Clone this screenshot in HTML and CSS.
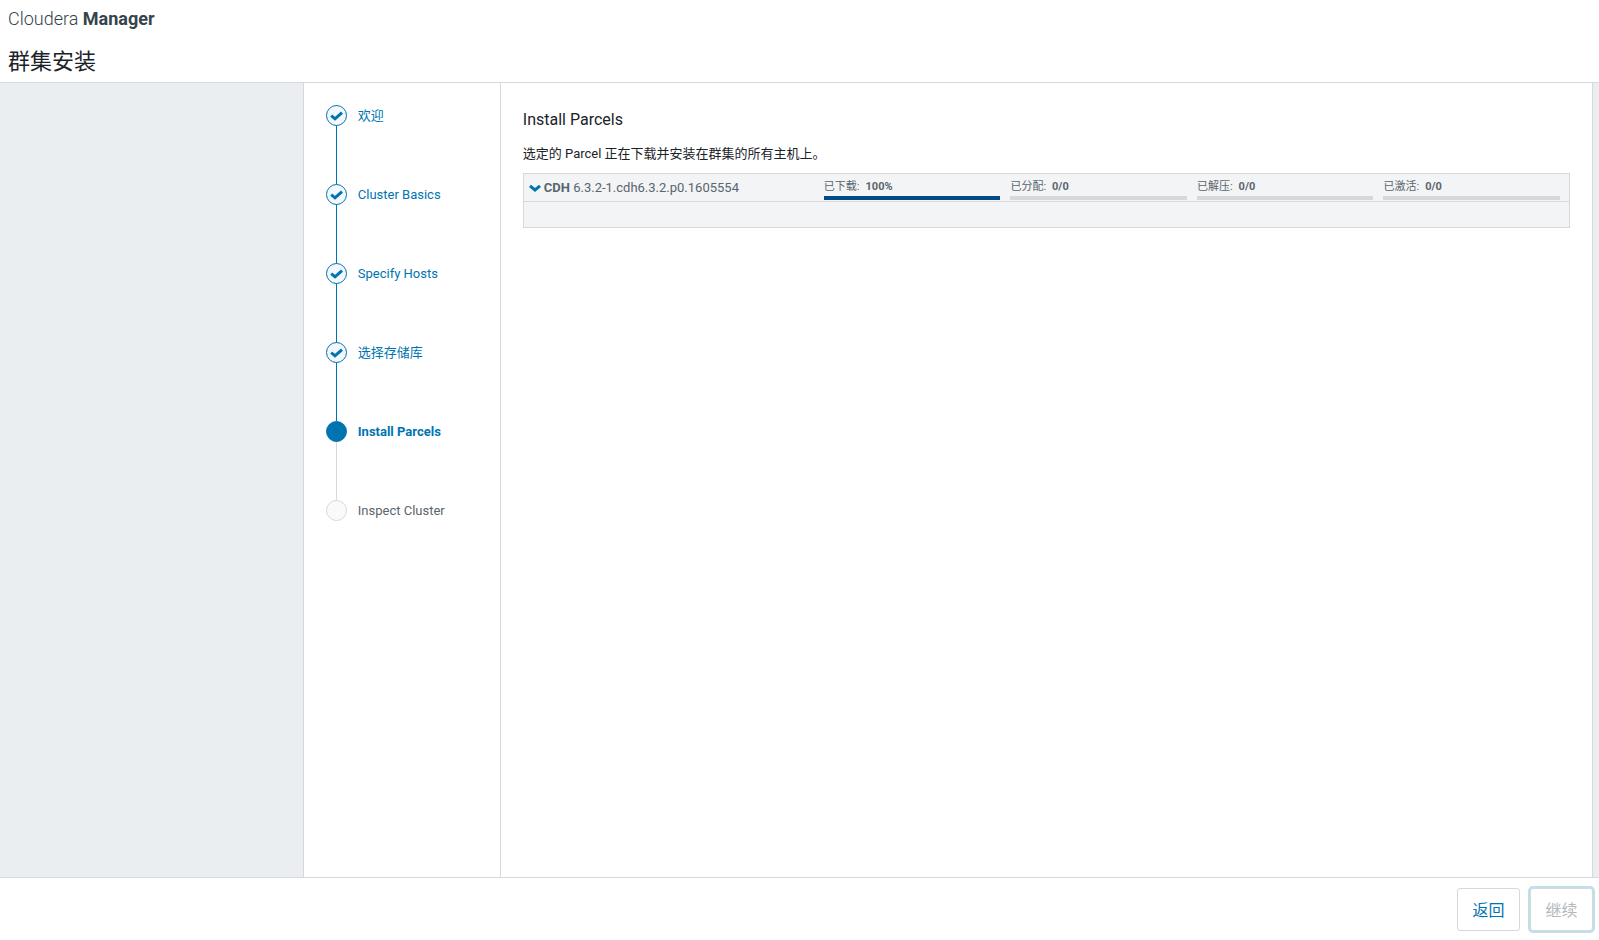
FILE: index.html
```html
<!DOCTYPE html>
<html lang="zh-CN">
<head>
<meta charset="utf-8">
<title>Cloudera Manager</title>
<link rel="stylesheet" href="styles.css">
</head>
<body>
<header class="header">
  <div class="brand">Cloudera <strong>Manager</strong></div>
  <h1 class="page-title">群集安装</h1>
</header>
<div class="wizard">
  <nav class="steps-panel" aria-label="群集安装">
    <ol class="steps">
      <li class="step done"><span class="dot"><svg viewBox="0 0 13 10"><path d="M1.2 4.6 5 7.8 12 1.6"/></svg></span><a class="step-label" href="#">欢迎</a></li>
      <li class="step done"><span class="dot"><svg viewBox="0 0 13 10"><path d="M1.2 4.6 5 7.8 12 1.6"/></svg></span><a class="step-label" href="#">Cluster Basics</a></li>
      <li class="step done"><span class="dot"><svg viewBox="0 0 13 10"><path d="M1.2 4.6 5 7.8 12 1.6"/></svg></span><a class="step-label" href="#">Specify Hosts</a></li>
      <li class="step done"><span class="dot"><svg viewBox="0 0 13 10"><path d="M1.2 4.6 5 7.8 12 1.6"/></svg></span><a class="step-label" href="#">选择存储库</a></li>
      <li class="step current" aria-current="step"><span class="dot"></span><a class="step-label" href="#">Install Parcels</a></li>
      <li class="step"><span class="dot"></span><span class="step-label">Inspect Cluster</span></li>
    </ol>
  </nav>
  <main class="content">
    <h2 class="section-title">Install Parcels</h2>
    <p class="description">选定的 Parcel 正在下载并安装在群集的所有主机上。</p>
    <section class="parcel">
      <div class="parcel-row">
        <button class="parcel-toggle" type="button" aria-expanded="true">
          <svg class="chevron" viewBox="0 0 12 8"><path d="M1 1.8 6 6 11 1.8"/></svg>
          <span><strong>CDH</strong> 6.3.2-1.cdh6.3.2.p0.1605554</span>
        </button>
        <div class="stats">
          <div class="stat"><div class="stat-label">已下载: <strong>100%</strong></div><div class="bar"><div class="bar-fill" style="width: 100%"></div></div></div>
          <div class="stat"><div class="stat-label">已分配: <strong>0/0</strong></div><div class="bar"></div></div>
          <div class="stat"><div class="stat-label">已解压: <strong>0/0</strong></div><div class="bar"></div></div>
          <div class="stat"><div class="stat-label">已激活: <strong>0/0</strong></div><div class="bar"></div></div>
        </div>
      </div>
      <div class="parcel-details"></div>
    </section>
  </main>
</div>
<footer class="footer">
  <button class="button" type="button">返回</button>
  <button class="button next" type="button" disabled>继续</button>
</footer>
</body>
</html>
```
FILE: styles.css
```css
* { box-sizing: border-box; }

body {
  margin: 0;
  min-height: 100vh;
  display: flex;
  flex-direction: column;
  background: #fff;
  color: #1b2329;
  font: 13px/20px Roboto, "Noto Sans CJK SC", sans-serif;
}

a { color: inherit; text-decoration: none; }

button { font-family: inherit; }

.header {
  padding: 8px 8px 4px;
  border-bottom: 1px solid #d6d8db;
}

.brand {
  font-size: 18px;
  font-weight: 300;
  line-height: 22px;
  color: #36444c;
}

.brand strong { font-weight: 700; }

.page-title {
  margin: 16px 0 0;
  font-size: 22px;
  font-weight: 400;
  line-height: 32px;
}

.wizard {
  flex: 1;
  display: flex;
  padding: 0 6px 0 calc(19% - 1px);
  background: #eaeef1;
}

.steps-panel {
  flex: 0 0 197px;
  padding: 22px;
  background: #fff;
  border-left: 1px solid #d6d8db;
}

.steps {
  margin: 0;
  padding: 0;
  list-style: none;
}

.step {
  display: flex;
  align-items: flex-start;
  gap: 11px;
  height: 79px;
  color: #5a656d;
  background: linear-gradient(#d6d8db, #d6d8db) 10px 0 / 1px 100% no-repeat;
}

.step:last-child { background: none; }

.step.done {
  color: #0074b0;
  background-image: linear-gradient(#0074b0, #0074b0);
}

.step.current { color: #0074b0; font-weight: 700; }

.step-label { line-height: 21px; }

.dot {
  display: flex;
  align-items: center;
  justify-content: center;
  width: 21px;
  height: 21px;
  border: 1px solid #d6d8db;
  border-radius: 50%;
  background: #f9fafc;
}

.done .dot { border-color: #0074b0; background: #f3f8fd; }

.current .dot { border-color: #0074b0; background: #0074b0; }

.dot svg {
  width: 13px;
  height: 10px;
  fill: none;
  stroke: #0074b0;
  stroke-width: 3;
}

.content {
  flex: 1;
  padding: 26px 22px;
  background: #fff;
  border: solid #d6d8db;
  border-width: 0 1px;
}

.section-title {
  margin: 0;
  font-size: 16px;
  font-weight: 400;
  line-height: 22px;
}

.description { margin: 13px 0 9px; }

.parcel {
  border: 1px solid #d6d8db;
  background: #f3f4f6;
  color: #5a656d;
}

.parcel-row {
  display: flex;
  justify-content: space-between;
  height: 28px;
  padding: 0 9px 0 5px;
  border-bottom: 1px solid #d6d8db;
}

.parcel-toggle {
  display: flex;
  align-items: center;
  gap: 3px;
  padding: 0;
  border: 0;
  background: none;
  color: inherit;
  font-size: 13px;
}

.chevron {
  width: 12px;
  height: 8px;
  fill: none;
  stroke: #0074b0;
  stroke-width: 3;
}

.stats {
  flex: 0 0 calc(71% + 4px);
  display: grid;
  grid-template-columns: repeat(4, 1fr);
  gap: 10px;
}

.stat { padding-top: 4px; }

.stat-label {
  display: flex;
  gap: 6px;
  font-size: 11px;
  line-height: 18px;
}

.bar { height: 4px; background: #d6d8db; }

.bar-fill { height: 100%; background: #004b86; }

.parcel-details { height: 25px; }

.footer {
  display: flex;
  justify-content: flex-end;
  gap: 10px;
  padding: 10px 6px 9px;
  border-top: 1px solid #d6d8db;
}

.button {
  width: 63px;
  height: 43px;
  padding: 0 0 2px;
  border: 1px solid #d6d8db;
  border-radius: 3px;
  background: #fff;
  color: #0074b0;
  font-size: 16px;
}

.button.next {
  color: #b3b8bd;
  box-shadow: 0 0 0 2px #bfdfed;
}
```
